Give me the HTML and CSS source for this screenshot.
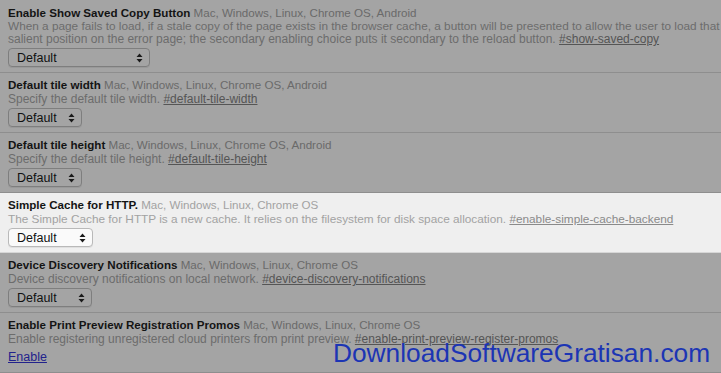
FILE: index.html
```html
<!DOCTYPE html>
<html>
<head>
<meta charset="utf-8">
<link rel="stylesheet" href="styles.css">
</head>
<body>
<div class="list">
  <div class="row dim first">
    <div class="title"><b>Enable Show Saved Copy Button</b> <span class="plat">Mac, Windows, Linux, Chrome OS, Android</span></div>
    <div class="desc tight">When a page fails to load, if a stale copy of the page exists in the browser cache, a button will be presented to allow the user to load that</div>
    <div class="desc">salient position on the error page; the secondary enabling choice puts it secondary to the reload button. <a class="ref">#show-saved-copy</a></div>
    <div class="sel w142"><span>Default</span><svg class="arr" width="7" height="10" viewBox="0 0 7 10"><path d="M3.5 0.5L6.5 4H0.5Z M3.5 9.5L6.5 6H0.5Z"/></svg></div>
  </div>
  <div class="row dim">
    <div class="title"><b>Default tile width</b> <span class="plat">Mac, Windows, Linux, Chrome OS, Android</span></div>
    <div class="desc">Specify the default tile width. <a class="ref">#default-tile-width</a></div>
    <div class="sel w74"><span>Default</span><svg class="arr" width="7" height="10" viewBox="0 0 7 10"><path d="M3.5 0.5L6.5 4H0.5Z M3.5 9.5L6.5 6H0.5Z"/></svg></div>
  </div>
  <div class="row dim">
    <div class="title"><b>Default tile height</b> <span class="plat">Mac, Windows, Linux, Chrome OS, Android</span></div>
    <div class="desc">Specify the default tile height. <a class="ref">#default-tile-height</a></div>
    <div class="sel w74"><span>Default</span><svg class="arr" width="7" height="10" viewBox="0 0 7 10"><path d="M3.5 0.5L6.5 4H0.5Z M3.5 9.5L6.5 6H0.5Z"/></svg></div>
  </div>
  <div class="row lit">
    <div class="title"><b>Simple Cache for HTTP.</b> <span class="plat">Mac, Windows, Linux, Chrome OS</span></div>
    <div class="desc tight">The Simple Cache for HTTP is a new cache. It relies on the filesystem for disk space allocation. <a class="ref">#enable-simple-cache-backend</a></div>
    <div class="sel w85"><span>Default</span><svg class="arr" width="7" height="10" viewBox="0 0 7 10"><path d="M3.5 0.5L6.5 4H0.5Z M3.5 9.5L6.5 6H0.5Z"/></svg></div>
  </div>
  <div class="row dim">
    <div class="title"><b>Device Discovery Notifications</b> <span class="plat">Mac, Windows, Linux, Chrome OS</span></div>
    <div class="desc">Device discovery notifications on local network. <a class="ref">#device-discovery-notifications</a></div>
    <div class="sel w84"><span>Default</span><svg class="arr" width="7" height="10" viewBox="0 0 7 10"><path d="M3.5 0.5L6.5 4H0.5Z M3.5 9.5L6.5 6H0.5Z"/></svg></div>
  </div>
  <div class="row dim">
    <div class="title"><b>Enable Print Preview Registration Promos</b> <span class="plat">Mac, Windows, Linux, Chrome OS</span></div>
    <div class="desc">Enable registering unregistered cloud printers from print preview. <a class="ref">#enable-print-preview-register-promos</a></div>
    <div class="action"><a class="enable">Enable</a></div>
  </div>
</div>
<div class="watermark">DownloadSoftwareGratisan.com</div>
</body>
</html>
```

FILE: styles.css
```css
html, body {
  margin: 0;
  padding: 0;
  background: #a4a4a4;
  width: 721px;
  height: 373px;
  overflow: hidden;
  position: relative;
}
body {
  font-family: "Liberation Sans", Arial, sans-serif;
  font-size: 12px;
  line-height: 14px;
}
.list {
  display: flex;
  flex-direction: column;
}
.row {
  padding: 5px 8px 5px 8px;
  border-bottom: 1px solid #8e8e8e;
  white-space: nowrap;
  overflow: hidden;
}
.row.first {
  padding-top: 6px;
}
.row.first .desc {
  line-height: 13px;
}
.row.dim {
  background: #a4a4a4;
}
.row.lit {
  background: #efefef;
  border-bottom-color: #d6d6d6;
}
.title {
  font-size: 11.6px;
}
.title b {
  color: #141414;
  font-weight: bold;
}
.plat {
  color: #6a6a6a;
}
.desc {
  color: #6c6c6c;
  font-size: 12px;
}
.desc.tight {
  font-size: 11.8px;
}
.ref {
  color: #555555;
  text-decoration: underline;
}
.lit .plat, .lit .desc {
  color: #a2a2a2;
}
.lit .ref {
  color: #8a8a8a;
}
.sel {
  margin-top: 2px;
  height: 19px;
  box-sizing: border-box;
  border: 1px solid #7e7e7e;
  border-radius: 4px;
  display: flex;
  align-items: center;
  justify-content: space-between;
  padding: 0 6px 0 8px;
  color: #111;
  font-size: 12.5px;
  box-shadow: 0 1px 0 #999;
}
.lit .sel {
  background: #fafafa;
  border-color: #b9b9b9;
  box-shadow: 0 1px 0 #e0e0e0;
}
.w142 { width: 142px; }
.w74 { width: 74px; }
.w85 { width: 85px; }
.w84 { width: 84px; }
.arr {
  fill: #1a1a1a;
}
.action {
  margin-top: 2px;
  height: 19px;
  font-size: 12.5px;
  line-height: 19px;
}
.enable {
  color: #22228c;
  text-decoration: underline;
}
.watermark {
  position: absolute;
  left: 333px;
  top: 338px;
  font-family: "Liberation Sans", Arial, sans-serif;
  font-size: 26.3px;
  line-height: 30px;
  color: #1c35b4;
  white-space: nowrap;
}
```
